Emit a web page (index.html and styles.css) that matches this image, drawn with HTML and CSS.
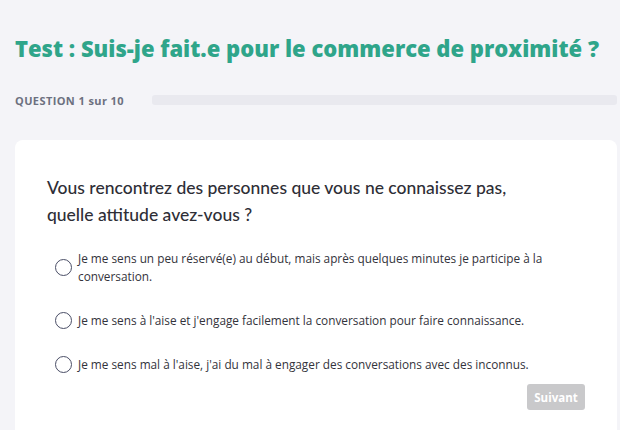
FILE: index.html
```html
<!DOCTYPE html>
<html lang="fr">
<head>
<meta charset="utf-8">
<link rel="stylesheet" href="styles.css">
</head>
<body>
<main class="page">
  <h1 class="title">Test : Suis-je fait.e pour le commerce de proximité ?</h1>
  <div class="progress-row">
    <span class="progress-label">QUESTION 1 sur 10</span>
    <div class="progress-track"><div class="progress-fill" style="width:0%"></div></div>
  </div>
  <section class="card">
    <h2 class="question">Vous rencontrez des personnes que vous ne connaissez pas, quelle attitude avez-vous ?</h2>
    <ul class="options">
      <li class="option option-multi"><span class="radio"></span><span class="option-text">Je me sens un peu réservé(e) au début, mais après quelques minutes je participe à la conversation.</span></li>
      <li class="option"><span class="radio"></span><span class="option-text">Je me sens à l'aise et j'engage facilement la conversation pour faire connaissance.</span></li>
      <li class="option"><span class="radio"></span><span class="option-text">Je me sens mal à l'aise, j'ai du mal à engager des conversations avec des inconnus.</span></li>
    </ul>
    <div class="actions"><button class="btn-next" disabled>Suivant</button></div>
  </section>
</main>
</body>
</html>
```
FILE: styles.css
```css
* { box-sizing: border-box; }
html, body { margin: 0; padding: 0; }
body {
  background: #f4f4f8;
  font-family: "Open Sans", "Lato", sans-serif;
  width: 620px;
  height: 430px;
  overflow: hidden;
}
.page {
  padding: 33px 3px 0 15px;
}
.title {
  margin: 0;
  font-size: 22px;
  line-height: 30px;
  font-weight: 800;
  color: #2fa58a;
  white-space: nowrap;
}
.progress-row {
  display: flex;
  align-items: center;
  gap: 28px;
  margin-top: 27px;
  height: 20px;
}
.progress-label {
  font-size: 11px;
  font-weight: 700;
  color: #6c7080;
  letter-spacing: 0.4px;
  white-space: nowrap;
}
.progress-track {
  flex: 1;
  height: 10px;
  background: #e9e9ef;
  border-radius: 3px;
}
.progress-fill { height: 100%; background: #2fa58a; }
.card {
  margin-top: 30px;
  background: #fff;
  border-radius: 8px;
  padding: 34px 32px 30px 32px;
  min-height: 300px;
}
.question {
  margin: 0;
  font-family: "Lato", sans-serif;
  font-size: 17.5px;
  line-height: 27px;
  font-weight: 500;
  color: #2e2e36;
  max-width: 510px;
}
.options {
  list-style: none;
  margin: 22px 0 0 8px;
  padding: 0;
  display: flex;
  flex-direction: column;
  gap: 26px;
}
.option {
  display: flex;
  align-items: center;
  gap: 6px;
}
.option-multi { margin-bottom: 1px; }
.radio {
  flex: none;
  width: 17px;
  height: 17px;
  border: 1.6px solid #4a4e66;
  border-radius: 50%;
}
.option-text {
  font-size: 11.8px;
  line-height: 17.5px;
  font-weight: 500;
  color: #33333b;
  max-width: 470px;
}
.actions {
  display: flex;
  justify-content: flex-end;
  margin-top: 11px;
}
.btn-next {
  background: #c9c9cb;
  color: #fff;
  border: none;
  border-radius: 3px;
  font-family: inherit;
  font-size: 11.5px;
  font-weight: 700;
  padding: 0;
  height: 26px;
  width: 58px;
}
```
